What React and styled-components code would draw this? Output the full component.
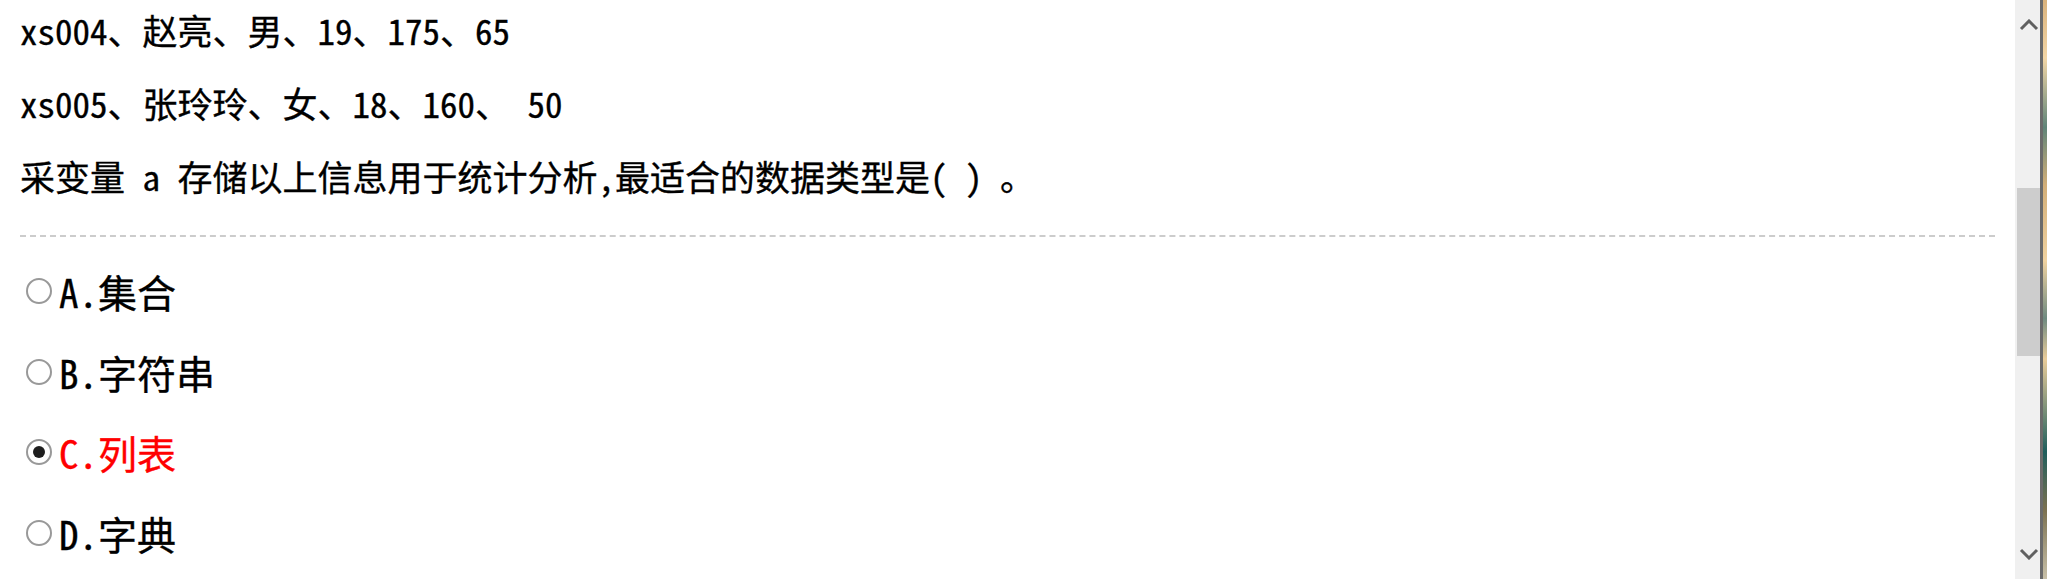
import React from "react";
import styled, { createGlobalStyle } from "styled-components";

const GlobalStyle = createGlobalStyle`
  html, body {
    margin: 0;
    padding: 0;
    overflow: hidden;
    background: #fff;
  }
`;

const lines = [
  "xs004、赵亮、男、19、175、65",
  "xs005、张玲玲、女、18、160、 50",
  "采变量 a 存储以上信息用于统计分析,最适合的数据类型是( ) 。",
];

const options = [
  { key: "A", text: "集合" },
  { key: "B", text: "字符串" },
  { key: "C", text: "列表", checked: true },
  { key: "D", text: "字典" },
];

const Chevron = ({ down }) => (
  <svg width="20" height="12" viewBox="0 0 20 12">
    <polyline
      points={down ? "2,2 10,10 18,2" : "2,10 10,2 18,10"}
      fill="none"
      stroke="#606060"
      strokeWidth="3"
    />
  </svg>
);

const App = () => {
  return (
    <Page>
      <GlobalStyle />
      <Content>
        <Question>
          {lines.map((l) => (
            <Line key={l}>{l}</Line>
          ))}
        </Question>
        <Divider />
        <Options>
          {options.map((o) => (
            <Option key={o.key} $checked={o.checked}>
              <Radio $checked={o.checked} />
              <span>
                {o.key}.{o.text}
              </span>
            </Option>
          ))}
        </Options>
      </Content>
      <Scrollbar>
        <Arrow>
          <Chevron />
        </Arrow>
        <Track>
          <Thumb />
        </Track>
        <Arrow>
          <Chevron down />
        </Arrow>
      </Scrollbar>
      <WindowEdge />
      <Wallpaper />
    </Page>
  );
};

export default App;

const Page = styled.div`
  display: flex;
  width: 2047px;
  height: 579px;
  overflow: hidden;
  font-family: "Noto Sans Mono CJK SC", "Noto Sans CJK SC", sans-serif;
  color: #000;
  -webkit-text-stroke: 0.35px currentColor;
`;

const Content = styled.div`
  flex: 1;
  padding: 0 20px;
  overflow: hidden;
`;

const Question = styled.div`
  margin-top: -7px;
`;

const Line = styled.div`
  font-size: 35px;
  line-height: 73px;
  white-space: pre;
`;

const Divider = styled.div`
  margin-top: 23px;
  border-top: 2px dashed #cccccc;
`;

const Options = styled.div`
  margin-top: 14px;
  display: flex;
  flex-direction: column;
`;

const Option = styled.label`
  display: flex;
  align-items: center;
  gap: 7px;
  height: 80.5px;
  padding-left: 6px;
  font-size: 39px;
  color: ${(p) => (p.$checked ? "#ff0000" : "#000")};
`;

const Radio = styled.span`
  box-sizing: border-box;
  width: 26px;
  height: 26px;
  border-radius: 50%;
  border: 2px solid #999999;
  background: #fff;
  display: flex;
  align-items: center;
  justify-content: center;
  flex-shrink: 0;
  -webkit-text-stroke: 0;
  &::after {
    content: "";
    display: ${(p) => (p.$checked ? "block" : "none")};
    width: 12px;
    height: 12px;
    border-radius: 50%;
    background: #1e1e1e;
  }
`;

const Scrollbar = styled.div`
  width: 25px;
  display: flex;
  flex-direction: column;
  background: #f0f0f0;
`;

const Arrow = styled.div`
  height: 50px;
  display: flex;
  align-items: center;
  justify-content: center;
  padding-left: 3px;
`;

const Track = styled.div`
  flex: 1;
  padding-left: 1px;
  padding-top: 138px;
`;

const Thumb = styled.div`
  height: 168px;
  background: #cdcdcd;
  margin-left: 1px;
`;

const WindowEdge = styled.div`
  width: 3px;
  background: #6b6b6b;
`;

const Wallpaper = styled.div`
  width: 4px;
  background: linear-gradient(
    to bottom,
    #d9b27c 0%,
    #f3d6a6 10%,
    #5f8478 22%,
    #d2ae78 32%,
    #f0d2a0 45%,
    #6e8a80 55%,
    #e9cc9a 62%,
    #1f5e5c 78%,
    #7a7050 88%,
    #c8c0a8 100%
  );
`;
